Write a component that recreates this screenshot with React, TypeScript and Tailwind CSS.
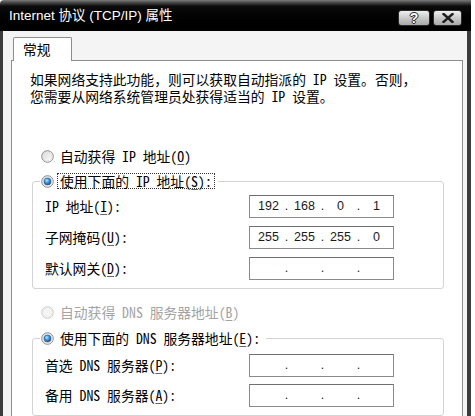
import React, { Fragment } from "react";

const CJK = "font-['Noto_Sans_CJK_SC',sans-serif] [font-feature-settings:'hwid']";

function Radio({ checked, disabled, id }: { checked?: boolean; disabled?: boolean; id: string }) {
  return (
    <svg width="13" height="13" viewBox="0 0 13 13" className="shrink-0">
      <defs>
        <linearGradient id={`bg${id}`} x1="0" y1="0" x2="1" y2="1">
          <stop offset="0" stopColor="#d8d8d8" />
          <stop offset="1" stopColor="#ffffff" />
        </linearGradient>
        <radialGradient id={`dot${id}`} cx="0.4" cy="0.35" r="0.7">
          <stop offset="0" stopColor="#bfe6ff" />
          <stop offset="0.5" stopColor="#3d8fd6" />
          <stop offset="1" stopColor="#14508f" />
        </radialGradient>
      </defs>
      <circle
        cx="6.5"
        cy="6.5"
        r="5.8"
        fill={disabled ? "#f4f4f4" : `url(#bg${id})`}
        stroke={disabled ? "#c9c9c9" : "#8b8b8b"}
        strokeWidth="1"
      />
      <circle cx="6.5" cy="6.5" r="4.3" fill="none" stroke={disabled ? "#ececec" : "#e2e2e2"} strokeWidth="0.8" />
      {checked && <circle cx="6.5" cy="6.5" r="3.5" fill={`url(#dot${id})`} stroke="#1d5a93" strokeWidth="0.6" />}
    </svg>
  );
}

function IpBox({ v }: { v?: string[] }) {
  return (
    <div className="w-[145px] h-[23px] border border-[#8a8a8a] border-t-[#6f6f6f] bg-white flex items-center pl-[3px] font-['Liberation_Sans',sans-serif] text-[12.5px] text-[#1a1a1a]">
      {[0, 1, 2, 3].map((i) => (
        <Fragment key={i}>
          <span className="w-[31px] text-center">{v ? v[i] : ""}</span>
          {i < 3 && <span className="w-[5px] text-center">.</span>}
        </Fragment>
      ))}
    </div>
  );
}

function Row({ label, acc, v }: { label: string; acc: string; v?: string[] }) {
  return (
    <div className="flex items-center h-[23px]">
      <span className="w-[204px] whitespace-pre">
        {label}(<u className="underline-offset-2 decoration-[#666]">{acc}</u>):
      </span>
      <IpBox v={v} />
    </div>
  );
}

export default function App() {
  return (
    <div className={`w-[475px] h-[416px] overflow-hidden bg-white ${CJK} text-[13.8px] text-black`}>
      <div className="w-[471px]">
        {/* Title bar */}
        <div className="h-[31px] flex items-start justify-between pl-[9px] pr-[9px] bg-gradient-to-b from-[#7a7a7a] via-[#0c0c0c] via-20% to-[#000000] rounded-tl-[4px]">
          <span className="mt-[7px] font-['Liberation_Sans','Noto_Sans_CJK_SC',sans-serif] [font-feature-settings:normal] text-[13.5px] leading-[18px] text-white">
            Internet 协议 (TCP/IP) 属性
          </span>
          <div className="flex gap-[3px] mt-[10px]">
            <div className="w-[32px] h-[16px] rounded-[3px] border border-[#2a2a2a] bg-gradient-to-b from-[#f0f0f0] via-[#c9c9c9] to-[#a9a9a9] flex items-center justify-center">
              <span className="font-['Liberation_Sans',sans-serif] font-bold text-[14px] leading-none text-white [text-shadow:0_0_1px_#222,0_0_1px_#222,1px_0_0_#333,-1px_0_0_#333,0_1px_0_#333,0_-1px_0_#333]">
                ?
              </span>
            </div>
            <div className="w-[29px] h-[16px] rounded-[3px] border border-[#2a2a2a] bg-gradient-to-b from-[#f0f0f0] via-[#c9c9c9] to-[#a9a9a9] flex items-center justify-center">
              <svg width="12" height="10" viewBox="0 0 12 10">
                <path d="M1.5 1 L10.5 9 M10.5 1 L1.5 9" stroke="#1e1e1e" strokeWidth="2.4" strokeLinecap="square" />
              </svg>
            </div>
          </div>
        </div>

        {/* Body */}
        <div className="border-l-[3px] border-r-[4px] border-[#3c3c3c] bg-[#f4f4f4] pl-[8px] pr-[4px] pt-[6px] h-[385px]">
          <div className="relative z-10 -mb-px ml-[2px] w-[59px] h-[24px] bg-white border border-b-0 border-[#8d8d8d] rounded-t-[2px] pl-[9px] flex items-center">
            常规
          </div>
          <div className="border border-[#8d8d8d] bg-white pl-[18px] pt-[10px] h-[400px]">
            <p className="leading-[17px] [font-feature-settings:normal]">
              如果网络支持此功能，则可以获取自动指派的<span className="[font-feature-settings:'hwid'] whitespace-pre"> IP </span>设置。否则，
              <br />
              您需要从网络系统管理员处获得适当的<span className="[font-feature-settings:'hwid'] whitespace-pre"> IP </span>设置。
            </p>

            <div className="mt-[43px] h-[16px] flex items-center pl-[11px] gap-[6px]">
              <Radio id="r1" />
              <span className="whitespace-pre leading-[14px]">
                自动获得 IP 地址(<u className="underline-offset-2 decoration-[#666]">O</u>)
              </span>
            </div>

            <div className="mt-[17px] ml-[2px] w-[412px] border border-[#d3d3d3] rounded-[3px] pl-[12px] pb-[8px]">
              <div className="-mt-[9px] -ml-[5px] w-fit bg-white pl-[1px] pr-[3px] h-[16px] flex items-center gap-[3px]">
                <Radio id="r2" checked />
                <span className="whitespace-pre leading-[14px] px-[2px] border border-dotted border-[#333]">
                  使用下面的 IP 地址(<u className="underline-offset-2 decoration-[#666]">S</u>):
                </span>
              </div>
              <div className="mt-[6px] flex flex-col gap-[8px]">
                <Row label="IP 地址" acc="I" v={["192", "168", "0", "1"]} />
                <Row label="子网掩码" acc="U" v={["255", "255", "255", "0"]} />
                <Row label="默认网关" acc="D" />
              </div>
            </div>

            <div className="mt-[15px] h-[16px] flex items-center pl-[11px] gap-[6px] text-[#a4a4a4]">
              <Radio id="r3" disabled />
              <span className="whitespace-pre leading-[14px]">
                自动获得 DNS 服务器地址(<u className="underline-offset-2">B</u>)
              </span>
            </div>

            <div className="mt-[18px] ml-[2px] w-[412px] border border-[#d3d3d3] rounded-[3px] pl-[12px] pb-[8px]">
              <div className="-mt-[9px] -ml-[5px] w-fit bg-white pl-[1px] pr-[3px] h-[16px] flex items-center gap-[3px]">
                <Radio id="r4" checked />
                <span className="whitespace-pre leading-[14px] px-[2px] border border-transparent">
                  使用下面的 DNS 服务器地址(<u className="underline-offset-2 decoration-[#666]">E</u>):
                </span>
              </div>
              <div className="mt-[8px] flex flex-col gap-[7px]">
                <Row label="首选 DNS 服务器" acc="P" />
                <Row label="备用 DNS 服务器" acc="A" />
              </div>
            </div>
          </div>
        </div>
      </div>
    </div>
  );
}
